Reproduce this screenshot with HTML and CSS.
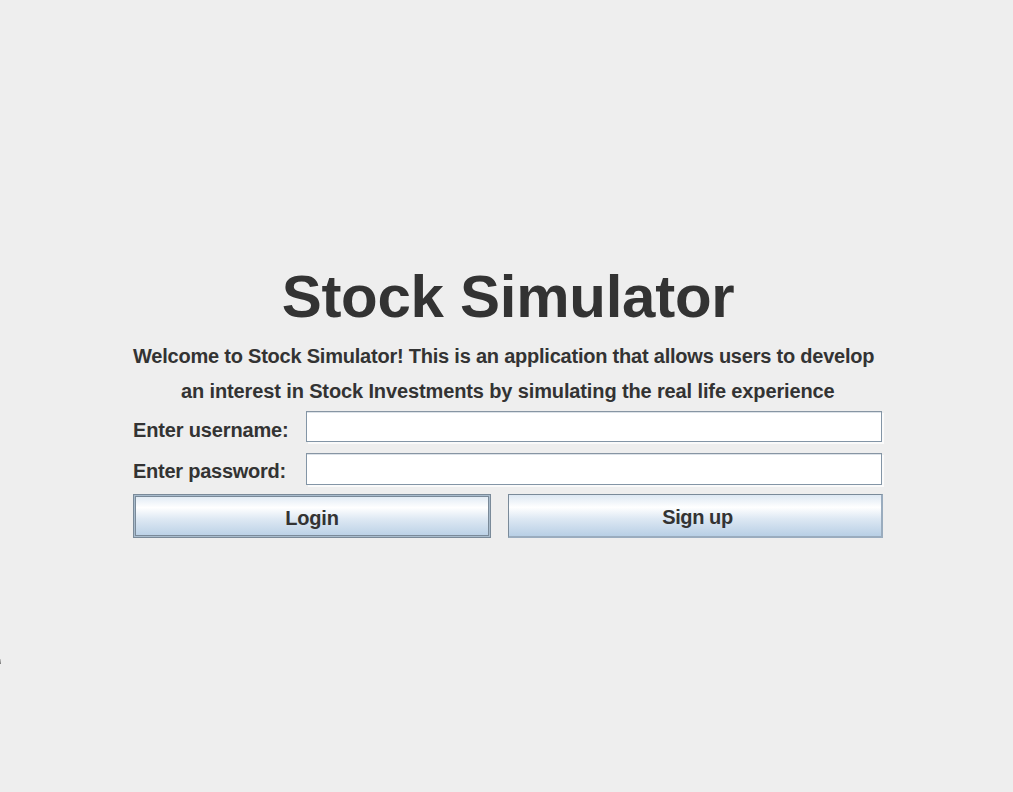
FILE: index.html
```html
<!DOCTYPE html>
<html lang="en">
<head>
<meta charset="utf-8">
<title>Stock Simulator</title>
<link rel="stylesheet" href="styles.css">
</head>
<body>
<main class="login">
  <h1 class="title">Stock Simulator</h1>
  <p class="intro first">Welcome to Stock Simulator! This is an application that allows users to develop</p>
  <p class="intro second">an interest in Stock Investments by simulating the real life experience</p>
  <form class="form">
    <div class="row">
      <label class="label user" for="username">Enter username:</label>
      <input class="field" id="username" type="text">
    </div>
    <div class="row">
      <label class="label pass" for="password">Enter password:</label>
      <input class="field tall" id="password" type="password">
    </div>
    <div class="actions">
      <button class="button default" type="button"><span class="caption">Login</span></button>
      <button class="button signup" type="button"><span class="caption">Sign up</span></button>
    </div>
  </form>
</main>
<span class="cursor-tip"></span>
</body>
</html>
```

FILE: styles.css
```css
* { box-sizing: border-box; }

body {
  margin: 0;
  height: 792px;
  overflow: hidden;
  background: #eeeeee;
  color: #333333;
  font: bold 20px/34px "Liberation Sans", Arial, sans-serif;
}

.login {
  width: 750px;
  margin-left: 133px;
  padding-top: 263px;
}

.title {
  margin: 0;
  height: 76px;
  font-size: 60px;
  line-height: 68px;
  letter-spacing: -0.27px;
  text-align: center;
  white-space: nowrap;
}

.intro {
  margin: 0;
  height: 35px;
  white-space: nowrap;
}

.first { letter-spacing: -0.22px; }

.second {
  padding-left: 48px;
  letter-spacing: -0.125px;
}

.form { padding-top: 2px; }

.row {
  display: flex;
  height: 41px;
}

.label {
  width: 173px;
  padding-top: 2px;
  white-space: nowrap;
}

.user { letter-spacing: -0.15px; }

.pass { letter-spacing: -0.25px; }

.field {
  width: 576px;
  height: 31px;
  padding: 0 4px;
  border: 1px solid #8395a6;
  border-top-color: #8795a3;
  border-radius: 0;
  outline: 0;
  background: #ffffff;
  box-shadow: 2px 2px 0 #fafafa, inset 0 1px 0 #dce2e8;
  font: inherit;
}

.tall {
  height: 32px;
  margin-top: 1px;
}

.actions {
  display: grid;
  grid-template-columns: 358px 375px;
  gap: 17px;
  padding-top: 1px;
}

.button {
  height: 44px;
  padding: 3px 0 0;
  border: 1px solid #7a8a99;
  border-bottom: 2px solid #9aacbe;
  border-right: 2px solid #9aacbe;
  background: linear-gradient(#dde8f3 0%, #ffffff 30%, #dde8f3 58%, #b8cfe5 100%);
  color: inherit;
  font: inherit;
}

.default {
  border: 1px solid #7a8a99;
  box-shadow: inset 0 0 0 1px #a9bccd, inset 0 0 0 2px #7a8a99;
}

.default .caption { letter-spacing: -0.2px; }

.signup { padding-left: 5px; }

.signup .caption { letter-spacing: -0.4px; }

.caption { display: block; }

.cursor-tip {
  position: absolute;
  left: 0;
  top: 659px;
  width: 1px;
  height: 5px;
  background: linear-gradient(#cccccc, #777777);
}
```
